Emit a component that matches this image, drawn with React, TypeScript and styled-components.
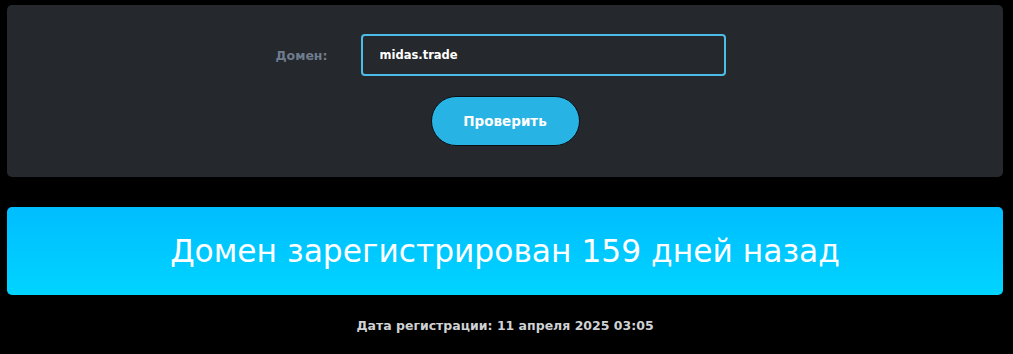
import React, { useState } from "react";
import styled, { createGlobalStyle } from "styled-components";

const GlobalStyle = createGlobalStyle`
    html, body {
        margin: 0;
        padding: 0;
        background: #000;
    }
    body {
        font-family: "DejaVu Sans", "Noto Sans", sans-serif;
    }
`;

export default function App() {
    const [domain, setDomain] = useState("midas.trade");

    return (
        <Page>
            <GlobalStyle />
            <Panel>
                <FormRow>
                    <Label htmlFor="domain">Домен:</Label>
                    <Input
                        id="domain"
                        value={domain}
                        onChange={(e) => setDomain(e.target.value)}
                    />
                </FormRow>
                <CheckButton>Проверить</CheckButton>
            </Panel>
            <Banner>Домен зарегистрирован 159 дней назад</Banner>
            <Details>Дата регистрации: 11 апреля 2025 03:05</Details>
        </Page>
    );
}

const Page = styled.div`
    padding: 5px 10px 0 7px;
    display: flex;
    flex-direction: column;
`;

const Panel = styled.div`
    background: #25282d;
    border-radius: 5px;
    padding: 29px 0 31px;
    display: flex;
    flex-direction: column;
    align-items: center;
    gap: 20px;
`;

const FormRow = styled.div`
    display: flex;
    align-items: center;
    gap: 33px;
    margin-right: 27px;
`;

const Label = styled.label`
    width: 70px;
    text-align: right;
    color: #6f7c8e;
    font-size: 12.5px;
    font-weight: bold;
`;

const Input = styled.input`
    box-sizing: border-box;
    width: 365px;
    height: 42px;
    padding: 0 17px;
    background: #25282d;
    border: 2px solid #4cbde6;
    border-radius: 4px;
    color: #fff;
    font-family: inherit;
    font-size: 11.5px;
    font-weight: bold;
    outline: none;
`;

const CheckButton = styled.button`
    box-sizing: border-box;
    width: 149px;
    height: 50px;
    border: 1px solid #0b0d10;
    border-radius: 25px;
    background: #27b4e4;
    color: #fff;
    font-family: inherit;
    font-size: 13.5px;
    font-weight: bold;
    cursor: pointer;
`;

const Banner = styled.div`
    margin-top: 30px;
    height: 88px;
    border-radius: 5px;
    background: linear-gradient(180deg, #00bdff 0%, #00d4ff 100%);
    color: #fff;
    font-size: 31.3px;
    display: flex;
    align-items: center;
    justify-content: center;
`;

const Details = styled.div`
    margin-top: 23px;
    text-align: center;
    color: #cfd1d4;
    font-size: 12.5px;
    font-weight: bold;
`;
